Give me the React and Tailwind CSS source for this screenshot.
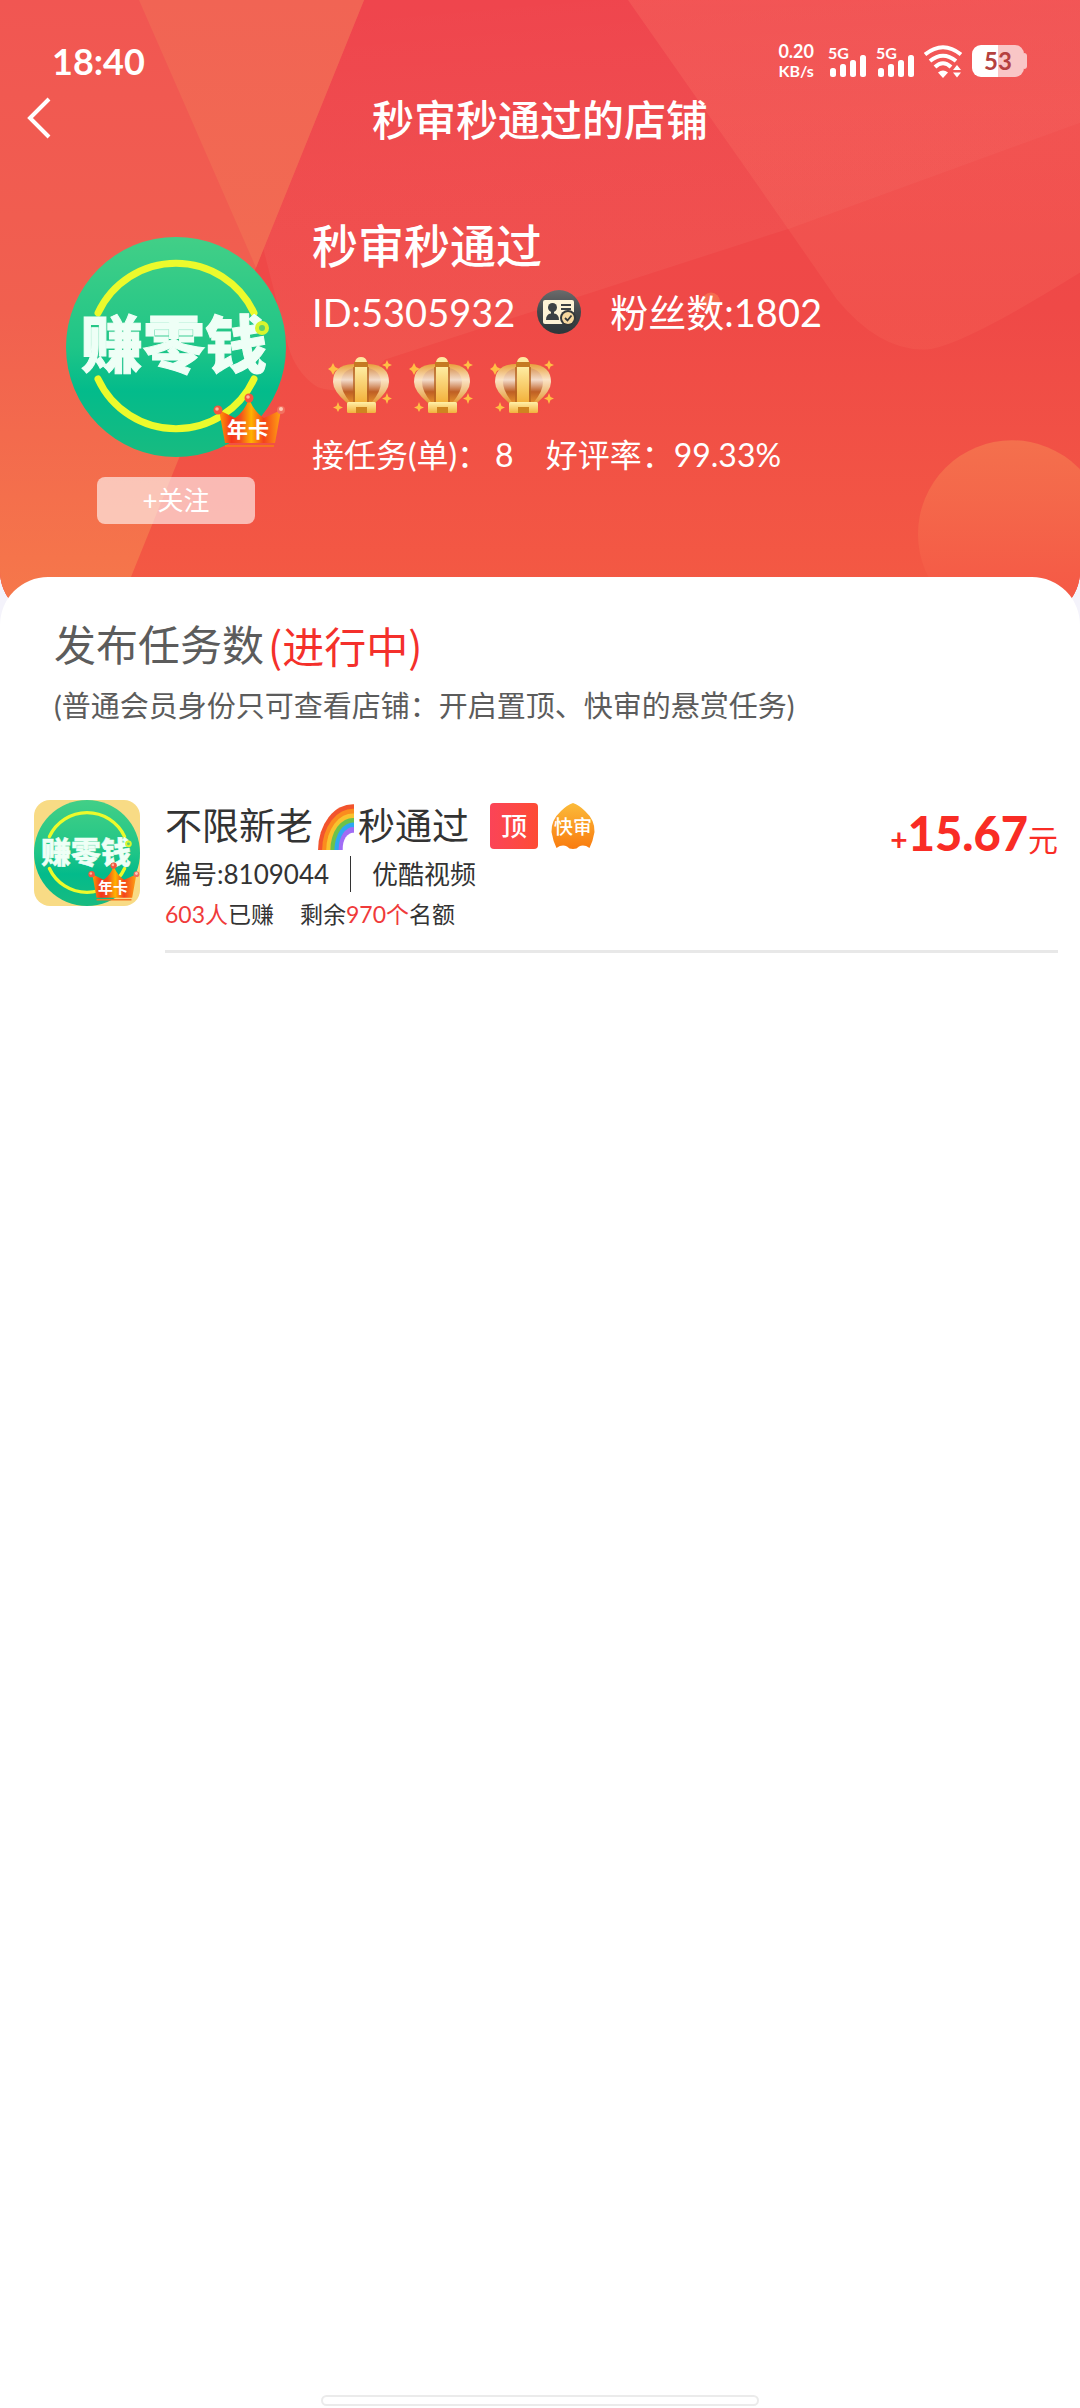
import React from "react";

function HeaderBackdrop() {
  return (
    <svg className="absolute inset-0 h-full w-full" viewBox="0 0 1080 620" preserveAspectRatio="none" aria-hidden="true">
      <defs>
        <linearGradient id="bgMain" x1="0" y1="0" x2="0" y2="1">
          <stop offset="0" stopColor="#ef454d" />
          <stop offset="0.5" stopColor="#ef4947" />
          <stop offset="1" stopColor="#f45b43" />
        </linearGradient>
        <linearGradient id="bgLeft" x1="0" y1="0" x2="0" y2="1">
          <stop offset="0" stopColor="#f15652" />
          <stop offset="0.5" stopColor="#f1604f" />
          <stop offset="1" stopColor="#f6794a" />
        </linearGradient>
        <linearGradient id="bgWedge" x1="0" y1="0" x2="0" y2="1">
          <stop offset="0" stopColor="#f16454" />
          <stop offset="1" stopColor="#f26b52" />
        </linearGradient>
        <linearGradient id="bgBand" x1="0.3" y1="0" x2="0.5" y2="1">
          <stop offset="0" stopColor="#ffffff" stopOpacity="0" />
          <stop offset="1" stopColor="#ffb890" stopOpacity="0.09" />
        </linearGradient>
        <linearGradient id="bgRight" x1="0" y1="0" x2="0" y2="1">
          <stop offset="0" stopColor="#ff8a70" stopOpacity="0.22" />
          <stop offset="1" stopColor="#ff8a70" stopOpacity="0.12" />
        </linearGradient>
        <linearGradient id="bgBall" x1="0" y1="0" x2="0" y2="1">
          <stop offset="0" stopColor="#f4704d" />
          <stop offset="0.8" stopColor="#f55a46" />
        </linearGradient>
      </defs>
      <rect width="1080" height="620" fill="url(#bgMain)" />
      <path d="M364 0H1080V123L789 229L385 360Q350 400 318 388Q296 374 288 346L200 0Z" fill="url(#bgBand)" />
      <path d="M628 0L788 229L837 300Q880 352 926 350Q960 348 1080 273V0Z" fill="url(#bgRight)" />
      <path d="M0 0H364L114 620H0Z" fill="url(#bgLeft)" />
      <path d="M139 0H364L256 268Z" fill="url(#bgWedge)" />
      <circle cx="1012" cy="535" r="94" fill="url(#bgBall)" />
      <circle cx="711" cy="302" r="9" fill="#f56a4e" />
    </svg>
  );
}

function Signal() {
  return (
    <div className="flex flex-col">
      <span className="h-[15px] text-[16px] leading-[15px] font-bold">5G</span>
      <svg className="-mt-[5px] ml-[2px]" width="36" height="22" viewBox="0 0 36 22" fill="#fff" aria-hidden="true">
        <rect x="0" y="13" width="6" height="9" rx="2.5" />
        <rect x="10" y="9" width="6" height="13" rx="2.5" />
        <rect x="20" y="5" width="6" height="17" rx="2.5" />
        <rect x="30" y="0" width="6" height="22" rx="2.5" />
      </svg>
    </div>
  );
}

function StatusBar() {
  return (
    <div className="flex h-[90px] items-center justify-between pt-8 pr-[53px] pl-[52px]">
      <span className="text-[36px] leading-10 font-bold">18:40</span>
      <div className="flex items-center gap-[10px]">
        <div className="mr-1 text-center text-[18px] leading-[19px] font-bold">
          <div>0.20</div>
          <div className="text-[16px]">KB/s</div>
        </div>
        <Signal />
        <Signal />
        <svg width="38" height="33" viewBox="0 0 38 33" aria-hidden="true">
          <g fill="none" stroke="#fff" strokeWidth="4">
            <path d="M1 9.5Q19-5 37 9.5" />
            <path d="M6 16Q19 5.500 32 16" />
            <path d="M11 22Q19 14.500 27 22" />
          </g>
          <path d="M14 27.500Q19 23.500 24 27.500L19 33Z" fill="#fff" />
          <path d="M29 25L33 20L37 25ZM29 27.500H37L33 32.500Z" fill="#fff" />
        </svg>
        <div className="flex items-center">
          <div className="flex h-8 w-[52px] items-center justify-center rounded-[9px] bg-linear-to-r from-white from-50% to-[#f9c6c6] to-50% text-[24px] font-bold text-[#b5413f]">
            53
          </div>
          <div className="h-4 w-[3px] rounded-r-[3px] bg-[#f9c6c6]" />
        </div>
      </div>
    </div>
  );
}

function YearCrown({ className }) {
  return (
    <svg className={className} viewBox="0 0 73 56" aria-hidden="true">
      <defs>
        <linearGradient id="yearCrown" x1="0" y1="0" x2="1" y2="0">
          <stop offset="0" stopColor="#ffa000" />
          <stop offset="0.2" stopColor="#f5331c" />
          <stop offset="0.35" stopColor="#f4511c" />
          <stop offset="0.52" stopColor="#ffb300" />
          <stop offset="0.72" stopColor="#f4421c" />
          <stop offset="1" stopColor="#ffa412" />
        </linearGradient>
      </defs>
      <path d="M6 17L22 25Q31 19 36 6Q42 20 51 25L68 17L62 50H12Z" fill="url(#yearCrown)" />
      <path d="M12 53H61" stroke="#f7741f" strokeWidth="2" />
      <circle cx="36" cy="5" r="4.500" fill="#f3543f" />
      <circle cx="35" cy="4" r="1.800" fill="#ffb49a" />
      <circle cx="5" cy="17" r="4.500" fill="#f3543f" />
      <circle cx="4" cy="16" r="1.800" fill="#ffb49a" />
      <circle cx="68" cy="17" r="4" fill="#f3705f" />
      <circle cx="68" cy="16" r="2" fill="#ffc9b6" />
      <text x="35" y="44" textAnchor="middle" fontSize="21" fontWeight="700" fill="#fff" fontFamily="'Noto Sans CJK SC', sans-serif">
        年卡
      </text>
    </svg>
  );
}

function ShopLogo({ className }) {
  return (
    <svg className={className} viewBox="0 0 220 220" role="img" aria-label="赚零钱">
      <defs>
        <linearGradient id="logoGreen" x1="0" y1="0" x2="0" y2="1">
          <stop offset="0" stopColor="#42cf87" />
          <stop offset="0.5" stopColor="#1fc587" />
          <stop offset="0.7" stopColor="#03bb8b" />
          <stop offset="1" stopColor="#18bb80" />
        </linearGradient>
      </defs>
      <circle cx="110" cy="110" r="110" fill="url(#logoGreen)" />
      <g fill="none" stroke="#ecfa2c" strokeWidth="7" strokeLinecap="round">
        <path d="M32 76A86 86 0 0 1 188 76" />
        <path d="M32 142A86 86 0 0 0 188 142" />
      </g>
      <text x="108" y="131" textAnchor="middle" fontSize="62" fontWeight="900" fill="#eefff6" stroke="#eefff6" strokeWidth="1" fontFamily="'Noto Sans CJK SC', sans-serif">
        赚零钱
      </text>
      <circle cx="196" cy="91" r="5" fill="#5fd06a" stroke="#d8f52e" strokeWidth="4" />
    </svg>
  );
}

function IdBadge() {
  return (
    <svg className="h-11 w-11" viewBox="0 0 44 44" role="img" aria-label="实名认证">
      <defs>
        <linearGradient id="idBadge" x1="0" y1="0" x2="0" y2="1">
          <stop offset="0" stopColor="#6b6b6b" />
          <stop offset="0.5" stopColor="#42474a" />
          <stop offset="1" stopColor="#2c3639" />
        </linearGradient>
      </defs>
      <circle cx="22" cy="22" r="22" fill="url(#idBadge)" />
      <rect x="6" y="10" width="31" height="24" rx="2" fill="#fdf3d6" />
      <circle cx="15.500" cy="17.500" r="4.500" fill="#3c4144" />
      <path d="M9 30Q9 24 14 23.500V20H17V23.500Q22 24 22 30Z" fill="#3c4144" />
      <path d="M24 15H34M24 19H34" stroke="#3c4144" strokeWidth="1.800" />
      <circle cx="31" cy="28" r="8" fill="#34393b" />
      <circle cx="31" cy="28" r="6" fill="#f7d9a0" />
      <path d="M28 28L30.500 30.500L34.500 25.500" fill="none" stroke="#34393b" strokeWidth="1.800" />
    </svg>
  );
}

function GoldCrown() {
  return (
    <svg className="h-14 w-16" viewBox="0 0 64 56" aria-hidden="true">
      <defs>
        <linearGradient id="crownOuter" x1="0" y1="0" x2="0" y2="1">
          <stop offset="0" stopColor="#e8a03c" />
          <stop offset="0.4" stopColor="#fbe3c6" />
          <stop offset="1" stopColor="#e59a35" />
        </linearGradient>
        <linearGradient id="crownInner" x1="0" y1="0" x2="0" y2="1">
          <stop offset="0" stopColor="#dc9a5c" />
          <stop offset="0.35" stopColor="#f3dccb" />
          <stop offset="0.7" stopColor="#bf5f24" />
          <stop offset="1" stopColor="#e08b2c" />
        </linearGradient>
        <linearGradient id="crownBar" x1="0" y1="0" x2="0" y2="1">
          <stop offset="0" stopColor="#fff0a8" />
          <stop offset="1" stopColor="#f3b23c" />
        </linearGradient>
      </defs>
      <path d="M19 46Q5 34 5 25Q5 8 25 7H41Q61 8 61 25Q61 34 47 46Z" fill="url(#crownOuter)" />
      <path d="M22 45Q13 34 13 25Q14 13 26 11H40Q52 13 53 25Q53 34 44 45Z" fill="url(#crownInner)" />
      <path d="M26 10V45M40 10V45" stroke="#b7641f" strokeWidth="1.500" />
      <rect x="27" y="8" width="12" height="37" fill="url(#crownBar)" />
      <path d="M27 5Q28 0 33 0Q38 0 39 5Z" fill="#ffe9a0" />
      <rect x="26" y="5" width="14" height="5" fill="#c57a22" />
      <rect x="19" y="45" width="29" height="11" rx="1.500" fill="url(#crownBar)" />
      <rect x="28" y="50" width="11" height="6" fill="#cf8420" />
      <g fill="#ffbf45">
        <path d="M5 6L7 10L11 12L7 14L5 18L3 14L0 12L3 10Z" />
        <path d="M59 3L60.500 6.500L64 8L60.500 9.500L59 13L57.500 9.500L54 8L57.500 6.500Z" />
        <path d="M59 36L60.500 40L64 41.500L60.500 43L59 47L57.500 43L54 41.500L57.500 40Z" />
        <path d="M10 45L11.500 49L15 50.500L11.500 52L10 55L8.500 52L5 50.500L8.500 49Z" />
      </g>
    </svg>
  );
}

function Rainbow() {
  const bands = [
    ["#f2542d", 34],
    ["#fb8c1e", 30],
    ["#f9c22e", 26],
    ["#6cc24a", 22],
    ["#2fa8f0", 18],
    ["#a06cf5", 14],
  ];
  return (
    <svg className="mx-1 h-[48px] w-[37px]" viewBox="0 0 36 42" preserveAspectRatio="none" role="img" aria-label="彩虹">
      {bands.map(([color, r]) => (
        <path key={color} d={`M${35 - r} 42A${r} ${r + 6} 0 0 1 36 ${36 - r}V42Z`} fill={color} />
      ))}
      <path d="M25 42A10 14 0 0 1 36 27V42Z" fill="#fff" />
    </svg>
  );
}

function FastReviewTag() {
  return (
    <svg className="h-[46px] w-[46px]" viewBox="0 0 46 46" role="img" aria-label="快审">
      <defs>
        <linearGradient id="fastTag" x1="0" y1="0" x2="0" y2="1">
          <stop offset="0" stopColor="#fbbb3a" />
          <stop offset="1" stopColor="#f97b0f" />
        </linearGradient>
      </defs>
      <path d="M23 0Q29 2 35 8Q45 17 44.500 29Q43 38 39.500 45Q34 41 29 43.500Q27 46 23 46Q19 46 17 43.500Q12 41 6.500 45Q3 38 1.500 29Q1 17 11 8Q17 2 23 0Z" fill="url(#fastTag)" />
      <text x="23" y="31" textAnchor="middle" fontSize="19" fontWeight="500" fill="#fff" fontFamily="'Noto Sans CJK SC', sans-serif">
        快审
      </text>
    </svg>
  );
}

function ShopHeader() {
  return (
    <header className="relative overflow-hidden rounded-b-[48px] bg-[#f04b48] pb-[95px] text-white">
      <HeaderBackdrop />
      <div className="relative">
        <StatusBar />
        <div className="grid h-[60px] grid-cols-[80px_1fr_80px] items-center">
          <button type="button" aria-label="返回" className="flex h-full items-start pt-[7px] pl-[27px]">
            <svg width="24" height="42" viewBox="0 0 24 42" fill="none" stroke="#fff" strokeWidth="4" aria-hidden="true">
              <path d="M22 2L3 21L22 40" />
            </svg>
          </button>
          <h1 className="text-center text-[42px] leading-[60px] font-medium">秒审秒通过的店铺</h1>
        </div>
        <div className="flex gap-[26px] pt-[68px] pl-[66px]">
          <div className="flex w-[220px] shrink-0 flex-col items-center gap-[20px] pt-[19px]">
            <div className="relative">
              <ShopLogo className="h-[220px] w-[220px]" />
              <YearCrown className="absolute right-0 bottom-2 h-14 w-[73px]" />
            </div>
            <button type="button" className="h-[47px] w-[158px] rounded-lg bg-white/60 text-[26px] leading-[47px] text-white">
              +关注
            </button>
          </div>
          <div className="flex min-w-0 flex-col">
            <h2 className="text-[46px] leading-[56px] font-medium">秒审秒通过</h2>
            <div className="mt-[10px] flex items-center text-[38px] leading-[56px]">
              <span>ID:5305932</span>
              <span className="mr-[29px] ml-[22px]">
                <IdBadge />
              </span>
              <span>粉丝数:1802</span>
            </div>
            <div className="mt-[17px] ml-4 flex gap-[17px]">
              <GoldCrown />
              <GoldCrown />
              <GoldCrown />
            </div>
            <div className="mt-[22px] flex gap-8 text-[32px] leading-10">
              <span className="flex gap-[6px]">
                <span>接任务(单)：</span>
                <span>8</span>
              </span>
              <span>好评率：99.33%</span>
            </div>
          </div>
        </div>
      </div>
    </header>
  );
}

function TaskItem() {
  return (
    <li className="flex gap-[25px] pr-[22px] pl-[34px]">
      <div className="relative h-[106px] w-[106px] shrink-0 overflow-hidden rounded-[16px] bg-[#f8db85]">
        <ShopLogo className="h-full w-full" />
        <YearCrown className="absolute right-0 bottom-1 h-10 w-[52px]" />
      </div>
      <div className="flex flex-1 justify-between border-b-[3px] border-[#e8e8e8] pb-[18px]">
        <div className="text-[#333]">
          <div className="flex h-[52px] items-center">
            <h3 className="flex items-center text-[37px] leading-[52px]">
              不限新老
              <Rainbow />
              秒通过
            </h3>
            <span className="ml-[21px] h-[46px] w-12 rounded-[4px] bg-linear-to-r from-[#fb4457] to-[#fe4b33] text-center text-[26px] leading-[46px] font-medium text-white">
              顶
            </span>
            <span className="ml-3">
              <FastReviewTag />
            </span>
          </div>
          <div className="mt-1 flex h-9 items-center text-[26px] leading-9">
            <span>编号:8109044</span>
            <span className="mx-[21px] h-9 w-px bg-[#333]" />
            <span>优酷视频</span>
          </div>
          <div className="mt-1 flex gap-[26px] text-[23px] leading-9">
            <span>
              <span className="text-[#f03a3a]">603人</span>已赚
            </span>
            <span>
              剩余<span className="text-[#f03a3a]">970个</span>名额
            </span>
          </div>
        </div>
        <div className="flex items-baseline text-[30px] leading-[66px] text-[#f92c25]">
          <span className="font-bold">+</span>
          <span className="text-[47px] font-black">15.67</span>
          <span>元</span>
        </div>
      </div>
    </li>
  );
}

export default function App() {
  return (
    <div className="flex min-h-screen flex-col bg-[#f4f3fb] font-['Lato','Noto_Sans_CJK_SC',sans-serif]">
      <ShopHeader />
      <main className="relative -mt-[42px] flex flex-1 flex-col rounded-t-[48px] bg-white">
        <section className="px-[54px] pt-[38px] text-[#5c5c5c]">
          <h2 className="flex gap-1 text-[42px] leading-[60px]">
            <span>发布任务数</span>
            <span className="font-['Noto_Sans_CJK_SC',sans-serif] text-[#f4302b]">(进行中)</span>
          </h2>
          <p className="mt-[11px] text-[29px] leading-10">(普通会员身份只可查看店铺：开启置顶、快审的悬赏任务)</p>
        </section>
        <ul className="mt-[74px]">
          <TaskItem />
        </ul>
        <div className="mx-auto mt-auto mb-[2px] h-[11px] w-[438px] rounded-full border-2 border-[#ebebeb] bg-white" />
      </main>
    </div>
  );
}
